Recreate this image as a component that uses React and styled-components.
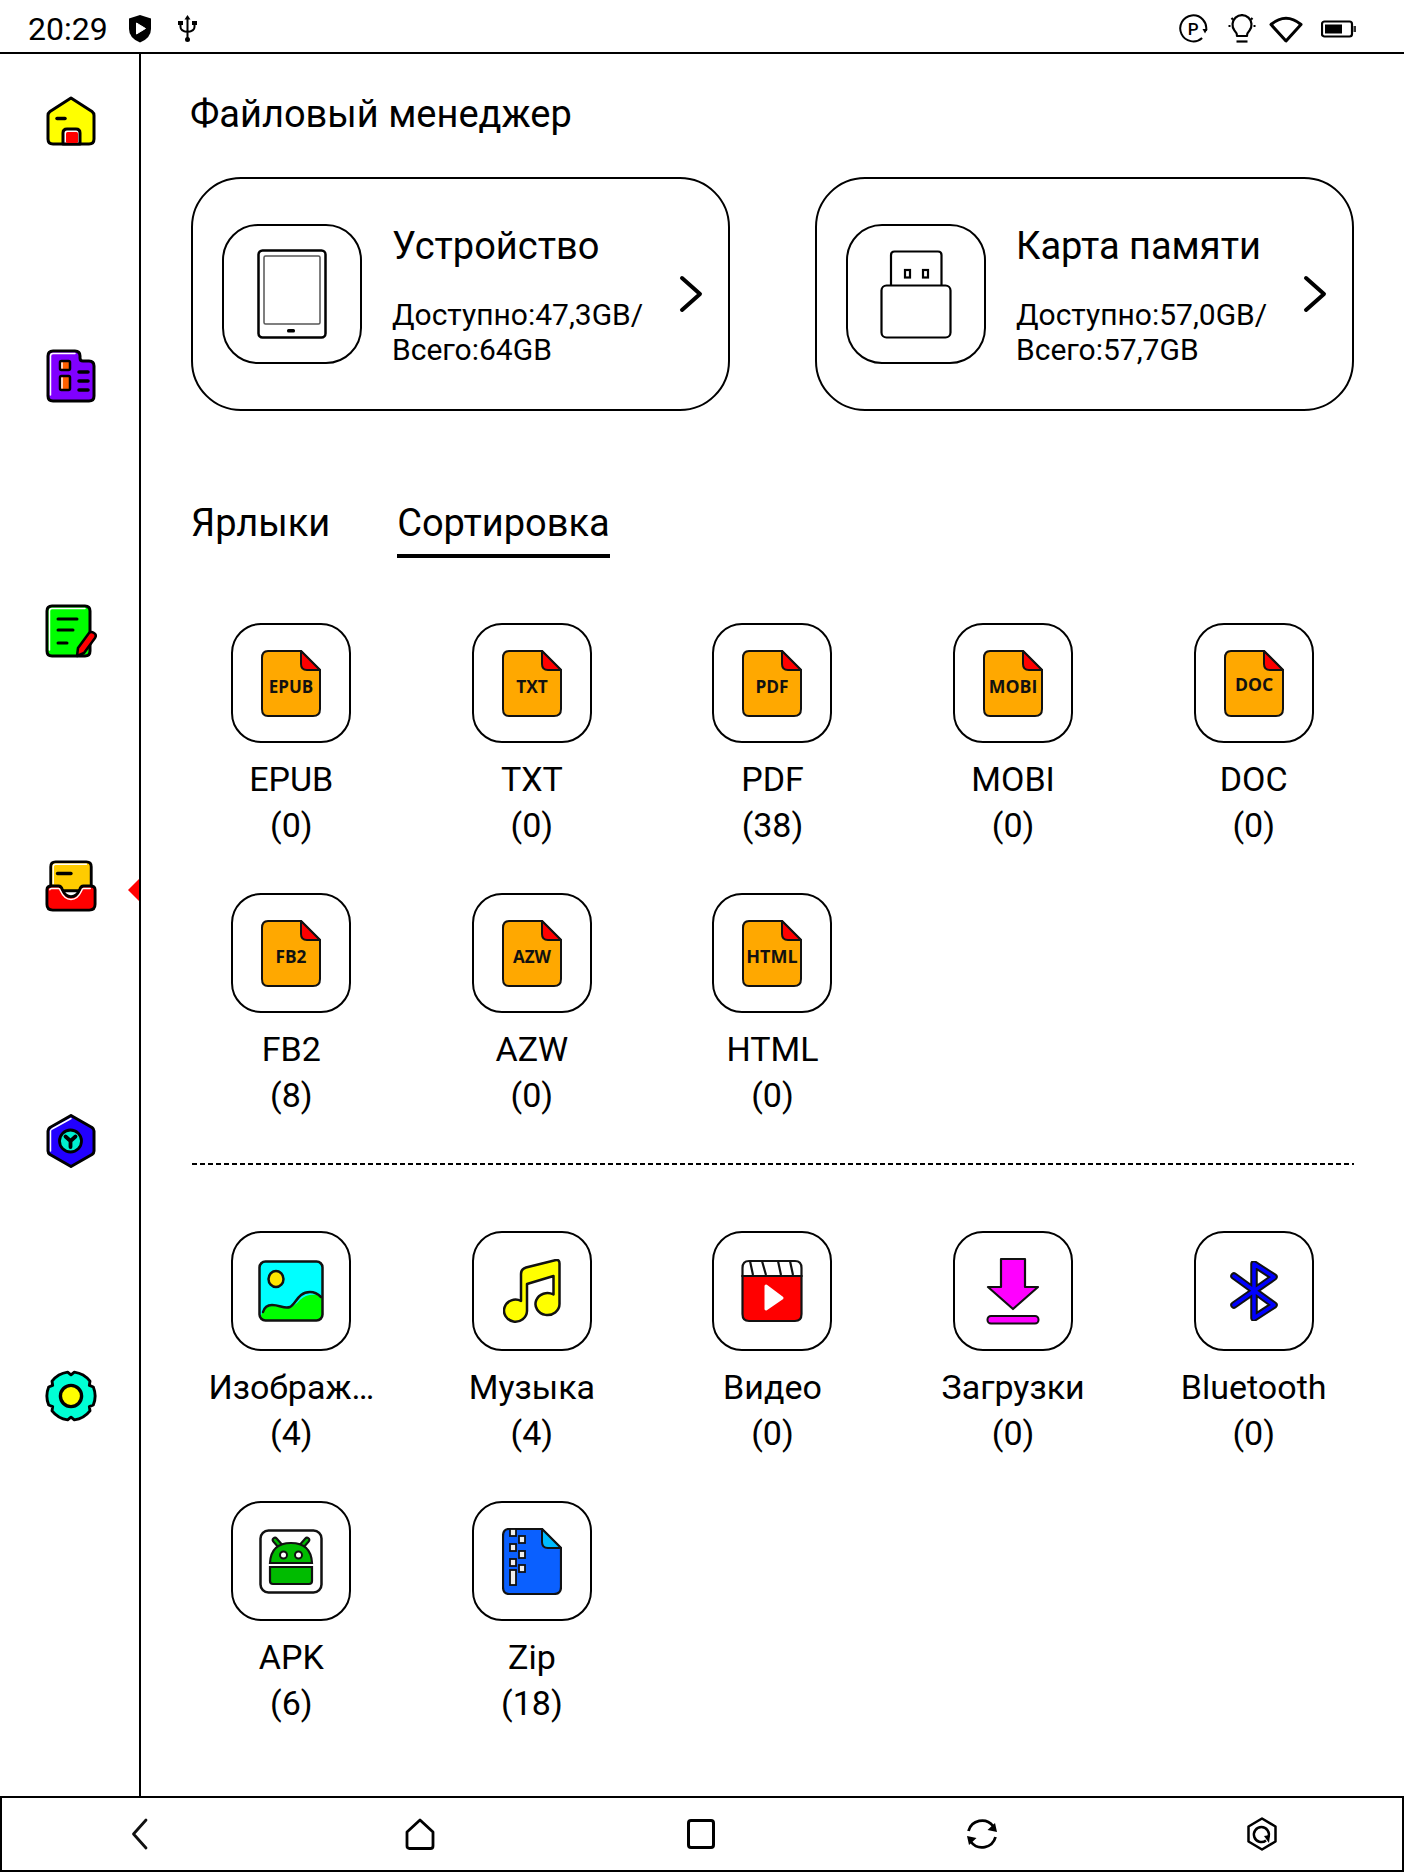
import React from "react";
import styled, { createGlobalStyle } from "styled-components";

const Global = createGlobalStyle`
  html, body { margin: 0; padding: 0; background: #fff; }
  * { box-sizing: border-box; }
  body { font-family: Roboto, "Noto Sans", sans-serif; color: #000; }
  svg { display: block; }
`;

const Page = styled.div`
  width: 1404px; height: 1872px; display: flex; flex-direction: column; background: #fff; overflow: hidden;
`;
const StatusBar = styled.header`
  height: 54px; flex: none; border-bottom: 2px solid #000; display: flex; align-items: center; padding: 5px 47px 0 28px;
`;
const Time = styled.div`font-size: 32px; line-height: 46px; width: 100px;`;
const StatusLeft = styled.div`display: flex; align-items: center; gap: 26px;`;
const StatusRight = styled.div`
  margin-left: auto; display: flex; align-items: center; gap: 13px;
  & > :first-child { margin-right: 7px; }
  & > :last-child { margin-left: 5px; }
`;
const Middle = styled.div`flex: 1; display: flex; min-height: 0;`;
const Sidebar = styled.nav`
  width: 141px; flex: none; border-right: 2px solid #000; position: relative;
  display: flex; flex-direction: column; align-items: center; gap: 203px; padding: 41px 0 0 3px;
`;
const SideItem = styled.div`
  width: 52px; height: 52px; display: flex; align-items: center; justify-content: center;
`;
const Marker = styled.div`
  position: absolute; right: 0; top: 825px; width: 0; height: 0;
  border-top: 11px solid transparent; border-bottom: 11px solid transparent; border-right: 11px solid #f00;
`;
const Main = styled.main`flex: 1; min-width: 0; padding: 38px 50px 0 50px;`;
const Title = styled.h1`margin: 0 0 41px -1px; font-size: 38px; font-weight: 400; line-height: 44px; white-space: nowrap;`;
const Cards = styled.div`display: flex; justify-content: space-between;`;
const Card = styled.section`
  width: 539px; height: 234px; border: 2px solid #000; border-radius: 50px; padding: 0 22px 0 29px;
  display: flex; align-items: center; position: relative;
`;
const CardIcon = styled.div`
  width: 140px; height: 140px; flex: none; border: 2px solid #000; border-radius: 36px;
  display: flex; align-items: center; justify-content: center;
`;
const CardText = styled.div`flex: 1; padding: 2px 0 0 30px;`;
const CardTitle = styled.div`font-size: 38px; line-height: 44px; margin-bottom: 29px; white-space: nowrap;`;
const CardDetail = styled.div`font-size: 30px; line-height: 35px; white-space: nowrap;`;
const ChevronWrap = styled.div`position: absolute; right: 25px; top: 96px;`;
const Tabs = styled.div`display: flex; gap: 67px; margin-top: 90px;`;
const Tab = styled.div`
  font-size: 38px; line-height: 44px; padding-bottom: 9px;
  border-bottom: 4px solid ${p => (p.$active ? "#000" : "transparent")};
`;
const Grid = styled.div`
  display: grid; grid-template-columns: repeat(5, 240.6px); row-gap: 45px; margin: ${p => p.$top}px -20px 0;
`;
const Tile = styled.div`display: flex; flex-direction: column; align-items: center; min-width: 0;`;
const TileBox = styled.div`
  width: 120px; height: 120px; border: 2px solid #000; border-radius: 30px; margin-bottom: 13px;
  display: flex; align-items: center; justify-content: center;
`;
const TileLabel = styled.div`font-size: 34px; line-height: 46px; white-space: nowrap;`;
const Dashed = styled.div`
  margin: 45px 0 0 1px; height: 2px;
  background: repeating-linear-gradient(90deg, #000 0 5px, transparent 5px 8px);
`;
const BottomNav = styled.footer`
  height: 76px; flex: none; border: 2px solid #000; display: grid; grid-template-columns: repeat(5, 1fr); align-items: center; justify-items: center;
  & > :nth-child(-n+2) { margin-right: 5px; }
  & > :nth-child(3) { margin-right: 2px; }
`;
const FileLabel = styled.text`
  font-family: "Open Sans", Roboto, sans-serif; font-weight: 700; fill: #111; text-anchor: middle;
`;
const PLetter = styled.text`
  font-family: Roboto, sans-serif; font-weight: 500; font-size: 17px; text-anchor: middle; fill: #000;
`;

const Sh = { stroke: "#000", strokeWidth: 3, strokeLinejoin: "round", strokeLinecap: "round" };
const Hi = { stroke: "#fff", strokeWidth: 1.5, fill: "none", strokeLinecap: "round" };

const Shield = () => (
  <svg width="24" height="29" viewBox="0 0 24 29">
    <path d="M12 1 L23 4.5 V15 Q23 24 12 28.500 Q1 24 1 15 V4.500 Z" fill="#000" />
    <path d="M8.500 9 L17.500 14.500 L8.500 20 Z" fill="#fff" stroke="#fff" strokeLinejoin="round" />
  </svg>
);
const Usb = () => (
  <svg width="19" height="27" viewBox="0 0 19 27" fill="none" stroke="#000" strokeWidth="2">
    <path d="M9.500 3 V24 M2.500 9 V12 Q2.500 16 9.500 17 Q16.500 16 16.500 12 V9" />
    <path d="M9.500 0 L12.500 4.500 H6.500 Z" fill="#000" stroke="none" />
    <circle cx="9.500" cy="24.500" r="2.500" fill="#000" stroke="none" />
    <rect x="0" y="6" width="5" height="4" fill="#000" stroke="none" />
    <rect x="14" y="6" width="5" height="4" fill="#000" stroke="none" />
  </svg>
);
const PCircle = () => (
  <svg width="29" height="29" viewBox="0 0 29 29" fill="none">
    <path d="M26 20 A13 13 0 1 1 27 12" stroke="#000" strokeWidth="2" transform="rotate(22 14.500 14.500)" />
    <path d="M23.500 15 H28.500 L26 19.500 Z" fill="#000" />
    <PLetter x="14.200" y="20.500">P</PLetter>
  </svg>
);
const Bulb = () => (
  <svg width="28" height="29" viewBox="0 0 28 29" fill="none" stroke="#000" strokeWidth="2.200">
    <path d="M9 22 Q9 19 6.500 16.500 A9.500 9.500 0 1 1 21.500 16.500 Q19 19 19 22 Z" strokeLinejoin="round" />
    <path d="M8.500 27.500 H19.500" />
    <path d="M14 0 V2 M3.500 4 L5 5.500 M24.500 4 L23 5.500 M0.500 12 H2.500 M25.500 12 H27.500" />
  </svg>
);
const Wifi = () => (
  <svg width="34" height="29" viewBox="0 0 34 29" fill="none" stroke="#000" strokeWidth="3" strokeLinejoin="round">
    <path d="M17 27 L2 10.500 Q17 -2 32 10.500 Z" />
  </svg>
);
const Battery = () => (
  <svg width="36" height="18" viewBox="0 0 36 18">
    <rect x="1" y="1.500" width="30" height="15" rx="2.500" fill="none" stroke="#000" strokeWidth="2.200" />
    <rect x="4" y="4.500" width="17" height="9" fill="#000" />
    <rect x="32.500" y="6" width="2.500" height="6" fill="#333" />
  </svg>
);

const HomeIcon = () => (
  <svg width="50" height="50" viewBox="0 0 50 50">
    <path d="M25 2 L46 15.500 Q48 17 48 19.500 V43 Q48 48 43 48 H7 Q2 48 2 43 V19.500 Q2 17 4 15.500 Z" fill="#ff0" {...Sh} />
    <path d="M17 48 V37 Q17 33 21 33 H30 Q34 33 34 37 V48 Z" fill="#fff" {...Sh} />
    <rect x="20" y="36" width="12" height="11" rx="1.500" fill="#f00" />
    <path d="M11 22.500 H19" {...Sh} strokeWidth="3.500" fill="none" />
  </svg>
);
const AppsIcon = () => (
  <svg width="50" height="54" viewBox="0 0 50 54">
    <path d="M2 7 Q2 2 7 2 H29 Q34 2 34 7 V9 Q34 12 37 12 H43 Q48 12 48 17 V47 Q48 52 43 52 H7 Q2 52 2 47 Z" fill="#8000ff" {...Sh} />
    <path d="M4.500 46 V7 Q4.500 4.500 7 4.500 H29" {...Hi} />
    <rect x="14" y="12" width="10" height="9" rx="1.500" fill="#ff6000" stroke="#000" strokeWidth="2.500" />
    <rect x="14" y="27" width="10" height="14" rx="1.500" fill="#ff6000" stroke="#000" strokeWidth="2.500" />
    <path d="M16 14 V19 M16 29 V39" {...Hi} />
    <path d="M33 23 H42 M33 32 H42 M33 41 H42" {...Sh} strokeWidth="3.500" fill="none" />
  </svg>
);
const NoteIcon = () => (
  <svg width="52" height="54" viewBox="0 0 52 54">
    <path d="M2 7 Q2 2 7 2 H40 Q45 2 45 7 V47 Q45 52 40 52 H7 Q2 52 2 47 Z" fill="#0f0" {...Sh} />
    <path d="M4.500 46 V7 Q4.500 4.500 7 4.500 H40" {...Hi} />
    <path d="M13 15 H32 M13 26 H28 M13 39 H22" {...Sh} strokeWidth="3" fill="none" />
    <path d="M32 52 L33 44 L44 29 Q46 27 49 29 Q52 31 50 34 L39 49 Z" fill="#f00" stroke="#000" strokeWidth="2.500" strokeLinejoin="round" />
  </svg>
);
const InboxIcon = () => (
  <svg width="54" height="54" viewBox="0 0 54 54">
    <path d="M6 7 Q6 2 11 2 H43 Q48 2 48 7 V32 H6 Z" fill="#fc0" {...Sh} />
    <path d="M8.500 25 V7 Q8.500 4.500 11 4.500 H43" {...Hi} />
    <path d="M13 14 H27" {...Sh} strokeWidth="3.500" fill="none" />
    <path d="M2 31 Q2 27 7 27 H14 Q17 27 18 31 Q21 38 27 38 Q33 38 36 31 Q37 27 40 27 H47 Q52 27 52 31 V46 Q52 52 46 52 H8 Q2 52 2 46 Z" fill="#f00" {...Sh} />
    <path d="M5 31 Q5 29.500 7 29.500 H14 Q15.500 29.500 16 32 Q20 41 27 41 Q34 41 38 32 Q38.500 29.500 40 29.500 H47" {...Hi} />
  </svg>
);
const HexIcon = () => (
  <svg width="50" height="54" viewBox="0 0 50 54">
    <path d="M25 1.500 L46 13.500 Q48 15 48 17 V37 Q48 39 46 40.500 L25 52.500 L4 40.500 Q2 39 2 37 V17 Q2 15 4 13.500 Z" fill="#20f" {...Sh} />
    <path d="M4.500 37 V17 Q4.500 16 6 15 L25 4.500" {...Hi} />
    <circle cx="24.500" cy="27" r="11" fill="#00f0d0" stroke="#000" strokeWidth="2.800" />
    <path d="M24.500 27 V33 M24.500 27 L19.500 22.500 M24.500 27 L29.500 22.500" stroke="#000" strokeWidth="3.800" strokeLinecap="round" fill="none" />
  </svg>
);

const gearPath = (() => {
  const pt = (r, deg) => {
    const a = (deg * Math.PI) / 180;
    return `${(27 + r * Math.cos(a)).toFixed(2)} ${(27 + r * Math.sin(a)).toFixed(2)}`;
  };
  let d = "";
  for (let i = 0; i < 6; i++) {
    const a = -90 + i * 60;
    d += `${i === 0 ? "M" : "L"}${pt(22, a)} L${pt(25, a + 8)} A25 25 0 0 1 ${pt(25, a + 52)} `;
  }
  return d + "Z";
})();
const GearIcon = () => (
  <svg width="54" height="54" viewBox="0 0 54 54">
    <path d={gearPath} fill="#00ffd5" {...Sh} />
    <circle cx="27" cy="27" r="11" fill="#ff0" stroke="#000" strokeWidth="3.500" />
  </svg>
);

const Tablet = () => (
  <svg width="70" height="90" viewBox="0 0 70 90" fill="none">
    <rect x="1.500" y="1.500" width="67" height="87" rx="4" stroke="#000" strokeWidth="2.500" />
    <rect x="7" y="7" width="56" height="68" rx="1.500" stroke="#555" strokeWidth="1.500" />
    <rect x="30" y="80" width="8" height="3.500" rx="1.500" fill="#000" />
  </svg>
);
const UsbStick = () => (
  <svg width="72" height="89" viewBox="0 0 72 89" fill="none" stroke="#000" strokeWidth="2.200">
    <path d="M11 36 V5 Q11 1.500 14.500 1.500 H58 Q61.500 1.500 61.500 5 V36" />
    <rect x="1.500" y="35.500" width="69" height="52" rx="5" />
    <rect x="25" y="20" width="5" height="7.500" />
    <rect x="43" y="20" width="5" height="7.500" />
  </svg>
);
const Chevron = () => (
  <svg width="24" height="38" viewBox="0 0 24 38" fill="none">
    <path d="M3 3 L21 19 L3 35" stroke="#000" strokeWidth="4" strokeLinecap="round" strokeLinejoin="round" />
  </svg>
);

const FileDoc = ({ label, size = 17, dy = 0 }) => (
  <svg width="60" height="67" viewBox="0 0 60 67">
    <path d="M7 1 H40 L59 20 V59 Q59 66 52 66 H7 Q1 66 1 59 V8 Q1 1 7 1 Z" fill="#ffa800" stroke="#111" strokeWidth="2" strokeLinejoin="round" />
    <path d="M40 1 L59 20 H46 Q40 20 40 14 Z" fill="#f00" stroke="#111" strokeWidth="2" strokeLinejoin="round" />
    <FileLabel x="30" y={43 + dy} fontSize={size}>{label}</FileLabel>
  </svg>
);
const ImageIcon = () => (
  <svg width="66" height="62" viewBox="0 0 66 62">
    <rect x="1.500" y="1.500" width="63" height="59" rx="6" fill="#0ff" />
    <path d="M3 56 Q5 46 14 46 Q24 46 30 48 Q36 47 42 40 Q50 32 64 36 V55 Q64 60 59 60 H7 Q3 60 3 56 Z" fill="#0f0" />
    <path d="M5 52 Q7 45 14 45 C22 45 26 49 32 47 C38 44 40 32 52 32 Q58 32 63 37" fill="none" stroke="#111" strokeWidth="2.500" strokeLinecap="round" />
    <rect x="1.500" y="1.500" width="63" height="59" rx="6" fill="none" stroke="#111" strokeWidth="2.500" />
    <ellipse cx="18" cy="19" rx="7.500" ry="8" fill="#ffe600" stroke="#111" strokeWidth="2.500" />
  </svg>
);
const MusicIcon = () => (
  <svg width="58" height="64" viewBox="0 0 58 64">
    <path transform="translate(2 0)" d="M16 42 V15 Q16 10 21 8.500 L51 1 Q54.500 0.500 54.500 4.500 V45 A12 11 0 1 1 48.500 35.500 V17 L22 25 V52 A11.500 11 0 1 1 16 42 Z" fill="#ff0" stroke="#111" strokeWidth="2.500" strokeLinejoin="round" />
  </svg>
);
const VideoIcon = () => (
  <svg width="62" height="64" viewBox="0 0 62 64">
    <path d="M1.500 17 H60.500 V55 Q60.500 62 54 62 H8 Q1.500 62 1.500 55 Z" fill="#f00" stroke="#111" strokeWidth="2.200" />
    <path d="M1.500 17 V9 Q1.500 2 8 2 H54 Q60.500 2 60.500 9 V17 Z" fill="#fff" stroke="#111" strokeWidth="2.200" />
    <path d="M9 2 L12 16 M21 2 L25 16 M37 2 L40 16 M49 2 L52 16" stroke="#111" strokeWidth="2.200" />
    <path d="M25 27 L41 39 L25 50 Z" fill="#fff" stroke="#fff" strokeWidth="3" strokeLinejoin="round" />
  </svg>
);
const DownloadIcon = () => (
  <svg width="54" height="68" viewBox="0 0 54 68">
    <path d="M15 2 H39 V30 H52 L27 52 L2 30 H15 Z" fill="#f0f" stroke="#111" strokeWidth="2.200" strokeLinejoin="round" />
    <rect x="1.500" y="59" width="51" height="7.500" rx="3.500" fill="#f0f" stroke="#111" strokeWidth="2" />
  </svg>
);
const BluetoothIcon = () => {
  const d = "M4 15 L44 44 L24 57 V3 L44 16 L4 44";
  return (
    <svg width="48" height="60" viewBox="0 0 48 60" fill="none">
      <path d={d} stroke="#111" strokeWidth="7.500" strokeLinejoin="round" strokeLinecap="round" />
      <path d={d} stroke="#00f" strokeWidth="3.500" strokeLinejoin="round" strokeLinecap="round" />
    </svg>
  );
};
const ApkIcon = () => (
  <svg width="64" height="65" viewBox="0 0 64 65">
    <rect x="1.500" y="1.500" width="61" height="62" rx="8" fill="#fff" stroke="#111" strokeWidth="2.500" />
    <path d="M16 11 L23 19 M48 11 L41 19" stroke="#111" strokeWidth="6.500" strokeLinecap="round" />
    <path d="M16 11 L23 19 M48 11 L41 19" stroke="#0b0" strokeWidth="2.500" strokeLinecap="round" />
    <path d="M11 34 Q12 14 32 14 Q52 14 53 34 Z" fill="#0b0" stroke="#111" strokeWidth="2.200" />
    <circle cx="24.500" cy="26" r="3.500" fill="#fff" stroke="#111" strokeWidth="2" />
    <circle cx="39.500" cy="26" r="3.500" fill="#fff" stroke="#111" strokeWidth="2" />
    <path d="M11 38 H53 V52 Q53 55 50 55 H14 Q11 55 11 52 Z" fill="#0b0" stroke="#111" strokeWidth="2.200" />
  </svg>
);
const ZipIcon = () => (
  <svg width="60" height="67" viewBox="0 0 60 67">
    <path d="M7 1 H40 L59 20 V59 Q59 66 52 66 H7 Q1 66 1 59 V8 Q1 1 7 1 Z" fill="#0a60ff" stroke="#111" strokeWidth="2.200" strokeLinejoin="round" />
    <path d="M40 1 L59 20 H46 Q40 20 40 14 Z" fill="#0bf" stroke="#111" strokeWidth="2" strokeLinejoin="round" />
    {[[8, 1, 6, 7], [8, 16, 6, 7], [8, 31, 6, 7], [8, 42, 6, 15], [17, 8, 6, 7], [17, 23, 6, 7], [17, 37, 6, 7]].map(([x, y, w, h]) => (
      <rect key={`${x}-${y}`} x={x} y={y} width={w} height={h} fill="#eee" stroke="#111" strokeWidth="1.800" />
    ))}
  </svg>
);

const BackNav = () => (
  <svg width="20" height="32" viewBox="0 0 20 32" fill="none">
    <path d="M16 2 L3.500 16 L16 30" stroke="#111" strokeWidth="2.800" strokeLinecap="round" strokeLinejoin="round" />
  </svg>
);
const HomeNav = () => (
  <svg width="30" height="32" viewBox="0 0 30 32" fill="none">
    <path d="M15 2 L28 14 V28 Q28 30.500 25.500 30.500 H4.500 Q2 30.500 2 28 V14 Z" stroke="#000" strokeWidth="2.800" strokeLinejoin="round" />
  </svg>
);
const SquareNav = () => (
  <svg width="28" height="30" viewBox="0 0 28 30" fill="none">
    <rect x="1.500" y="1.500" width="25" height="27" rx="2.500" stroke="#000" strokeWidth="3" />
  </svg>
);
const SyncNav = () => (
  <svg width="32" height="32" viewBox="0 0 32 32" fill="none">
    <path d="M2.500 13 A14 14 0 0 1 27 8" stroke="#000" strokeWidth="2.800" />
    <path d="M29.500 19 A14 14 0 0 1 5 24" stroke="#000" strokeWidth="2.800" />
    <path d="M31 14 L21.500 12 L29 5 Z M1 18 L10.500 20 L3 27 Z" fill="#000" />
  </svg>
);
const HexNav = () => (
  <svg width="30" height="34" viewBox="0 0 30 34" fill="none">
    <path d="M15 1.500 L28.500 9.500 V24.500 L15 32.500 L1.500 24.500 V9.500 Z" stroke="#000" strokeWidth="2.500" strokeLinejoin="round" />
    <path d="M21.500 20 A7.500 7.500 0 1 0 19 23.500" stroke="#000" strokeWidth="2.500" />
    <path d="M17 19 L23 18 L22 26 Z" fill="#000" />
  </svg>
);

const sideIcons = [HomeIcon, AppsIcon, NoteIcon, InboxIcon, HexIcon, GearIcon];
const docs = [
  { l: "EPUB", c: 0, s: 17 }, { l: "TXT", c: 0, s: 17.300 }, { l: "PDF", c: 38, s: 17.300 }, { l: "MOBI", c: 0, s: 17.700 }, { l: "DOC", c: 0, s: 17.600, dy: -2 },
  { l: "FB2", c: 8, s: 17.300 }, { l: "AZW", c: 0, s: 17 }, { l: "HTML", c: 0, s: 18 },
];
const media = [
  { l: "Изображ…", c: 4, I: ImageIcon }, { l: "Музыка", c: 4, I: MusicIcon }, { l: "Видео", c: 0, I: VideoIcon },
  { l: "Загрузки", c: 0, I: DownloadIcon }, { l: "Bluetooth", c: 0, I: BluetoothIcon }, { l: "APK", c: 6, I: ApkIcon }, { l: "Zip", c: 18, I: ZipIcon },
];

const TileItem = ({ icon, label, count }) => (
  <Tile>
    <TileBox>{icon}</TileBox>
    <TileLabel>{label}</TileLabel>
    <TileLabel>({count})</TileLabel>
  </Tile>
);

const StorageCard = ({ icon, title, free, total }) => (
  <Card>
    <CardIcon>{icon}</CardIcon>
    <CardText>
      <CardTitle>{title}</CardTitle>
      <CardDetail>Доступно:{free}GB/</CardDetail>
      <CardDetail>Всего:{total}GB</CardDetail>
    </CardText>
    <ChevronWrap><Chevron /></ChevronWrap>
  </Card>
);

export default function App() {
  return (
    <Page>
      <Global />
      <StatusBar>
        <Time>20:29</Time>
        <StatusLeft><Shield /><Usb /></StatusLeft>
        <StatusRight><PCircle /><Bulb /><Wifi /><Battery /></StatusRight>
      </StatusBar>
      <Middle>
        <Sidebar>
          {sideIcons.map((I, i) => <SideItem key={i}><I /></SideItem>)}
          <Marker />
        </Sidebar>
        <Main>
          <Title>Файловый менеджер</Title>
          <Cards>
            <StorageCard icon={<Tablet />} title="Устройство" free="47,3" total="64" />
            <StorageCard icon={<UsbStick />} title="Карта памяти" free="57,0" total="57,7" />
          </Cards>
          <Tabs>
            <Tab>Ярлыки</Tab>
            <Tab $active>Сортировка</Tab>
          </Tabs>
          <Grid $top={65}>
            {docs.map(d => (
              <TileItem key={d.l} label={d.l} count={d.c} icon={<FileDoc label={d.l} size={d.s} dy={d.dy || 0} />} />
            ))}
          </Grid>
          <Dashed />
          <Grid $top={66}>
            {media.map(({ l, c, I }) => <TileItem key={l} label={l} count={c} icon={<I />} />)}
          </Grid>
        </Main>
      </Middle>
      <BottomNav>
        <BackNav /><HomeNav /><SquareNav /><SyncNav /><HexNav />
      </BottomNav>
    </Page>
  );
}
